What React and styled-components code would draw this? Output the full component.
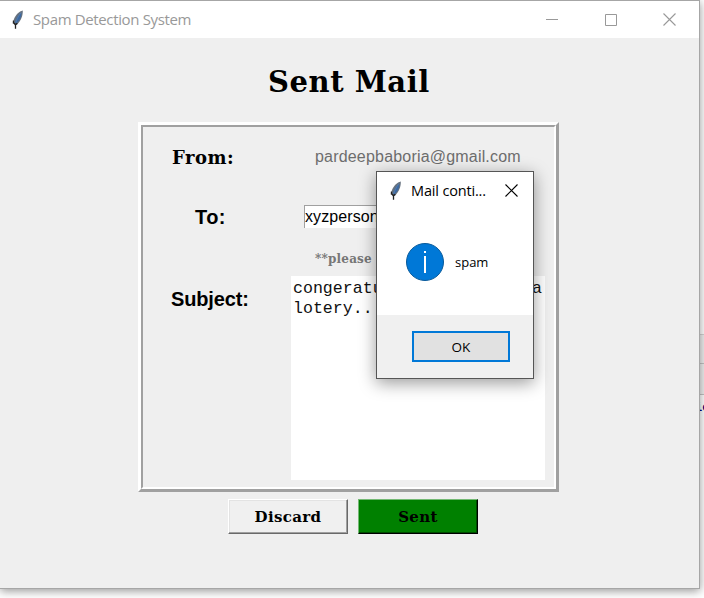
import React from "react";
import styled, { createGlobalStyle } from "styled-components";

const bookman = '"DejaVu Serif", serif';
const segoe = '"Open Sans", "Noto Sans", sans-serif';
const arial = '"Liberation Sans", Arial, sans-serif';

const Global = createGlobalStyle`
  * { box-sizing: border-box; }
  body { margin: 0; overflow: hidden; background: #fff; }
`;

const Desktop = styled.main`
  position: relative;
  width: 704px;
  height: 598px;
  overflow: hidden;
  background: #fff;
`;

const Behind = styled.aside`
  position: absolute;
  right: 0;
  top: 0;
  width: 14px;
  height: 598px;
  padding-top: 334px;
  background: #fff;
`;

const Bars = styled.div`
  height: 61px;
  display: grid;
  grid-template-rows: 29px 31px;
  background: #f0f0f0;
  border-top: 1px solid #d4d4d4;
  & > span { border-bottom: 1px solid #c4c4c4; }
`;

const Clipped = styled.div`
  font: bold 12px/26px "Liberation Mono", monospace;
  color: #00007f;
  padding-left: 5px;
  white-space: nowrap;
`;

const Window = styled.section`
  position: relative;
  width: 700px;
  height: 589px;
  border: solid #a6a6a6;
  border-width: 1px 1px 1px 0;
  background: #efefef;
  box-shadow: 0 2px 9px rgba(0, 0, 0, 0.42);
`;

const TitleBar = styled.header`
  height: 37px;
  display: flex;
  align-items: center;
  background: #fff;
  padding-left: 11px;
`;

const WindowTitle = styled.span`
  flex: 1;
  margin-left: 7px;
  font: 15px/35px ${segoe};
  letter-spacing: -0.36px;
  color: #999;
`;

const Controls = styled.div`
  display: grid;
  grid-template-columns: repeat(3, 59px);
  justify-items: center;
  align-items: center;
  width: 177px;
`;

const Heading = styled.h1`
  margin: 0;
  padding: 26px 0 0 268px;
  height: 84px;
  font: bold 29px/36px ${bookman};
  letter-spacing: 0.55px;
`;

const Panel = styled.div`
  width: 421px;
  height: 370px;
  margin-left: 138px;
  border: 3px solid;
  border-color: #fff #a0a0a0 #a0a0a0 #fff;
`;

const PanelInner = styled.div`
  height: 364px;
  border: 2px solid;
  border-color: #a0a0a0 #fff #fff #a0a0a0;
  display: grid;
  grid-template-columns: 148px 254px;
  grid-template-rows: 60px 60px 29px 204px;
`;

const Label = styled.div`
  justify-self: start;
  padding: ${(p) => p.$top}px 0 0 ${(p) => p.$left}px;
  font: bold ${(p) => p.$size}px/24px ${(p) => p.$face};
  letter-spacing: ${(p) => p.$spacing || 0}px;
  color: #000;
`;

const Sender = styled.div`
  padding: 18px 0 0 24px;
  font: 16px/24px ${arial};
  letter-spacing: 0.19px;
  color: #6d6d6d;
  white-space: nowrap;
`;

const Recipient = styled.div`
  margin: 18px 0 0 13px;
  width: 218px;
  height: 23px;
  border: solid #a0a0a0;
  border-width: 1px 0 0 1px;
  background: #fff;
  font: 16px/22px ${arial};
  letter-spacing: 0.1px;
  overflow: hidden;
`;

const Hint = styled.div`
  padding-left: 24px;
  font: bold 12px/24px ${bookman};
  letter-spacing: 0.2px;
  color: #777;
  white-space: nowrap;
`;

const Message = styled.div`
  height: 204px;
  background: #fff;
  padding: 3px 0 0 2px;
  font: 16.6px/20px "Liberation Mono", monospace;
  color: #111;
  white-space: pre;
`;

const Actions = styled.div`
  display: flex;
  gap: 10px;
  padding: 7px 0 0 228px;
`;

const Button = styled.button`
  width: 120px;
  height: 35px;
  padding: 0;
  border: 1px solid;
  border-color: ${(p) => (p.$green ? "#73b973 #000 #000 #73b973" : "#fff #696969 #696969 #fff")};
  box-shadow: ${(p) => (p.$green ? "inset -1px -1px #004b00" : "inset -1px -1px #a0a0a0, inset 1px 1px #e3e3e3")};
  background: ${(p) => (p.$green ? "#008000" : "#f0f0f0")};
  color: #000;
  font: bold 15px/32px ${bookman};
  letter-spacing: 0.35px;
`;

const Dialog = styled.section`
  position: absolute;
  left: 376px;
  top: 170px;
  width: 158px;
  height: 208px;
  border: 1px solid #555;
  background: #fff;
  box-shadow: 0 4px 16px rgba(0, 0, 0, 0.4);
`;

const DialogBar = styled.header`
  height: 37px;
  display: flex;
  align-items: center;
  padding: 0 15px 0 12px;
`;

const DialogTitle = styled.span`
  flex: 1;
  padding-left: 7px;
  font: 14.5px/36px ${segoe};
  letter-spacing: -0.16px;
  color: #000;
  white-space: nowrap;
`;

const DialogBody = styled.div`
  height: 106px;
  display: flex;
  align-items: center;
  gap: 11px;
  padding: 0 0 0 29px;
  font: 13px/20px ${segoe};
  color: #000;
`;

const DialogFooter = styled.footer`
  height: 63px;
  padding: 16px 0 0 35px;
  background: #f0f0f0;
`;

const OkButton = styled.button`
  display: block;
  width: 98px;
  height: 31px;
  padding: 0;
  border: 2px solid #0078d7;
  background: #e1e1e1;
  color: #000;
  font: 13.5px/26px ${segoe};
`;

function Feather() {
  return (
    <svg width="15" height="20" viewBox="0 0 15 20" fill="none">
      <path d="M11.8 0.4 C8.2 1.2 4.6 4.5 2.8 9.5 L2.2 13.6 L4.2 15.4 L6.4 14.2 C9.8 10.5 12 5.5 11.8 0.4Z" fill="#66717e" />
      <path d="M10.4 2.4 C7 5 4.6 8.5 4 13 L5.8 13 C8.8 10 10.6 6.5 10.4 2.4Z" fill="#3b69a3" />
      <path d="M10 2.5 C7 6.5 5.4 10 4.8 13" stroke="#6589b3" strokeWidth="0.6" />
      <path d="M2.5 10.5 L2.4 13.6 M3 13 L4.5 14.6 L6.3 13.3 M4.5 14 L4.5 18.8" stroke="#222" strokeWidth="1.3" />
    </svg>
  );
}

function Cross({ color }) {
  return (
    <svg width="13" height="13" viewBox="0 0 13 13">
      <path d="M0.5 0.5 L12.5 12.5 M12.5 0.5 L0.5 12.5" stroke={color} strokeWidth="1.1" />
    </svg>
  );
}

function InfoIcon() {
  return (
    <svg width="38" height="38" viewBox="0 0 38 38">
      <circle cx="19" cy="19" r="18.5" fill="#0078d7" stroke="#085a9b" />
      <path d="M18 8h2v2h-2z M18 13h2v17h-2z" fill="#fff" />
    </svg>
  );
}

export default function App() {
  return (
    <Desktop>
      <Global />
      <Behind>
        <Bars><span /><span /></Bars>
        <Clipped>ic</Clipped>
      </Behind>
      <Window>
        <TitleBar>
          <Feather />
          <WindowTitle>Spam Detection System</WindowTitle>
          <Controls>
            <svg width="12" height="12"><path d="M0 5.5h12" stroke="#999" /></svg>
            <svg width="12" height="12"><path d="M.5 .5h11v11h-11z" fill="none" stroke="#999" /></svg>
            <Cross color="#999" />
          </Controls>
        </TitleBar>
        <Heading>Sent Mail</Heading>
        <Panel>
          <PanelInner>
            <Label $left={29} $top={19} $size={18} $face={bookman} $spacing={0.5}>From:</Label>
            <Sender>pardeepbaboria@gmail.com</Sender>
            <Label $left={52} $top={18} $size={20} $face={arial} $spacing={0.4}>To:</Label>
            <Recipient>xyzperson@gmail.com</Recipient>
            <span />
            <Hint>**please e</Hint>
            <Label $left={28} $top={11} $size={20} $face={arial} $spacing={-0.15}>Subject:</Label>
            <Message>{"congeratulation you won a\nlotery.."}</Message>
          </PanelInner>
        </Panel>
        <Actions>
          <Button>Discard</Button>
          <Button $green>Sent</Button>
        </Actions>
        <Dialog>
          <DialogBar>
            <Feather />
            <DialogTitle>Mail conti...</DialogTitle>
            <Cross color="#000" />
          </DialogBar>
          <DialogBody>
            <InfoIcon />
            <span>spam</span>
          </DialogBody>
          <DialogFooter>
            <OkButton>OK</OkButton>
          </DialogFooter>
        </Dialog>
      </Window>
    </Desktop>
  );
}
